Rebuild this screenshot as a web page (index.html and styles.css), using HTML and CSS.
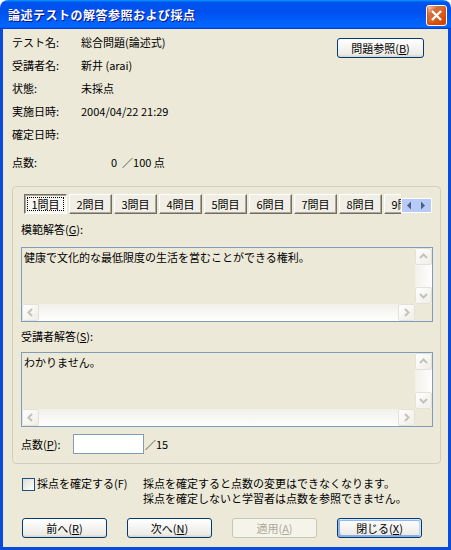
FILE: index.html
```html
<!DOCTYPE html>
<html lang="ja">
<head>
    <meta charset="UTF-8">
    <meta name="viewport" content="width=device-width, initial-scale=1.0">
    <title>論述テストの解答参照および採点</title>
    <link rel="stylesheet" href="styles.css">
</head>
<body>

<div class="window">
    <div class="titlebar">
        <span class="title">論述テストの解答参照および採点</span>
        <span class="close">
            <svg width="13" height="13" viewBox="0 0 13 13"><path d="M2 2L11 11M11 2L2 11" stroke="#fff" stroke-width="2.4"/></svg>
        </span>
    </div>

    <div class="client">
        <div class="head">
            <div class="info">
                <div class="row"><span class="lbl">テスト名:</span><span>総合問題(論述式)</span></div>
                <div class="row"><span class="lbl">受講者名:</span><span>新井 (arai)</span></div>
                <div class="row"><span class="lbl">状態:</span><span>未採点</span></div>
                <div class="row"><span class="lbl">実施日時:</span><span>2004/04/22 21:29</span></div>
                <div class="row"><span class="lbl">確定日時:</span><span></span></div>
                <div class="row score"><span class="lbl">点数:</span><span class="pts">0 &nbsp;／100 点</span></div>
            </div>
            <button class="btn ref">問題参照(<u>B</u>)</button>
        </div>

        <div class="group">
            <div class="tabs">
                <div class="strip">
                    <span class="tab on">1問目</span>
                    <span class="tab">2問目</span>
                    <span class="tab">3問目</span>
                    <span class="tab">4問目</span>
                    <span class="tab">5問目</span>
                    <span class="tab">6問目</span>
                    <span class="tab">7問目</span>
                    <span class="tab">8問目</span>
                    <span class="tab">9問目</span>
                </div>
                <span class="spin">
                    <svg width="29" height="13" viewBox="0 0 29 13"><path d="M5 6.5L9 2.5V10.5Z M23 6.5L19 2.5V10.5Z" fill="#4d6185"/></svg>
                </span>
            </div>

            <div class="cap first">模範解答(<u>G</u>):</div>
            <div class="memo first">
                <div class="text">健康で文化的な最低限度の生活を営むことができる権利。</div>
                <div class="vbar">
                    <span class="arr"><svg width="15" height="15" viewBox="0 0 15 15"><path d="M4 9L7.5 5.5L11 9" fill="none" stroke="#c4c3b9" stroke-width="2"/></svg></span>
                    <span class="arr"><svg width="15" height="15" viewBox="0 0 15 15"><path d="M4 6L7.5 9.5L11 6" fill="none" stroke="#c4c3b9" stroke-width="2"/></svg></span>
                </div>
                <div class="hbar">
                    <span class="arr"><svg width="15" height="15" viewBox="0 0 15 15"><path d="M9 4L5.5 7.5L9 11" fill="none" stroke="#c4c3b9" stroke-width="2"/></svg></span>
                    <span class="arr"><svg width="15" height="15" viewBox="0 0 15 15"><path d="M6 4L9.5 7.5L6 11" fill="none" stroke="#c4c3b9" stroke-width="2"/></svg></span>
                </div>
                <div class="corner"></div>
            </div>

            <div class="cap">受講者解答(<u>S</u>):</div>
            <div class="memo">
                <div class="text">わかりません。</div>
                <div class="vbar">
                    <span class="arr"><svg width="15" height="15" viewBox="0 0 15 15"><path d="M4 9L7.5 5.5L11 9" fill="none" stroke="#c4c3b9" stroke-width="2"/></svg></span>
                    <span class="arr"><svg width="15" height="15" viewBox="0 0 15 15"><path d="M4 6L7.5 9.5L11 6" fill="none" stroke="#c4c3b9" stroke-width="2"/></svg></span>
                </div>
                <div class="hbar">
                    <span class="arr"><svg width="15" height="15" viewBox="0 0 15 15"><path d="M9 4L5.5 7.5L9 11" fill="none" stroke="#c4c3b9" stroke-width="2"/></svg></span>
                    <span class="arr"><svg width="15" height="15" viewBox="0 0 15 15"><path d="M6 4L9.5 7.5L6 11" fill="none" stroke="#c4c3b9" stroke-width="2"/></svg></span>
                </div>
                <div class="corner"></div>
            </div>

            <div class="points">
                <span class="plbl">点数(<u>P</u>):</span>
                <span class="pbox"></span>
                <span>／15</span>
            </div>
        </div>

        <div class="confirm">
            <label class="check"><span class="box"></span>採点を確定する(F)</label>
            <p class="note">採点を確定すると点数の変更はできなくなります。<br>採点を確定しないと学習者は点数を参照できません。</p>
        </div>

        <div class="actions">
            <button class="btn">前へ(<u>R</u>)</button>
            <button class="btn">次へ(<u>N</u>)</button>
            <button class="btn" disabled>適用(<u>A</u>)</button>
            <button class="btn def">閉じる(<u>X</u>)</button>
        </div>
    </div>
</div>

</body>
</html>
```

FILE: styles.css
```css
* { margin: 0; padding: 0; box-sizing: border-box; }
body {
    background: #fff;
    font-family: "Noto Sans CJK JP", sans-serif;
    font-size: 11px;
    color: #000;
}
u { text-decoration: underline; }

.window {
    width: 451px;
    height: 550px;
    display: flex;
    flex-direction: column;
    border-radius: 8px 8px 0 0;
    overflow: hidden;
}
.titlebar {
    height: 29px;
    flex: none;
    display: flex;
    justify-content: space-between;
    align-items: flex-start;
    padding: 0 4px 0 8px;
    background: linear-gradient(180deg, #0997ff, #0053ee 8%, #0050ee 40%, #0066ff 88%, #0066ff 93%, #005bff 95%, #003dd7 96%, #003dd7);
}
.title {
    color: #fff;
    font-weight: bold;
    font-size: 12px;
    letter-spacing: 0.5px;
    line-height: 30px;
    text-shadow: 1px 1px #0f1089;
}
.close {
    width: 21px;
    height: 21px;
    margin-top: 5px;
    display: flex;
    align-items: center;
    justify-content: center;
    border: 1px solid #fff;
    border-radius: 3px;
    background: radial-gradient(circle at 90% 90%, #cc4600 0, #dc6527 55%, #cd7546 70%, #ffccb2 90%, #fff 100%);
    box-shadow: inset 0 -1px 2px 1px #da4600;
}

.client {
    flex: 1;
    background: #ece9d8;
    border: 3px solid #0a4bd9;
    border-top: none;
    padding: 2px 7px 0 9px;
}

.head {
    display: flex;
    justify-content: space-between;
    align-items: flex-start;
}
.row {
    display: flex;
    height: 23px;
    line-height: 23px;
}
.row.score { margin-top: 5px; }
.lbl { width: 69px; }
.pts { padding-left: 30px; }

.btn {
    font: inherit;
    width: 85px;
    height: 20px;
    color: #000;
    border: 1px solid #003c74;
    border-radius: 3px;
    background: linear-gradient(180deg, #fff, #ecebe6 86%, #d6d0c5);
}
.btn.ref {
    width: 87px;
    margin: 7px 17px 0 0;
}
.btn.def {
    box-shadow: inset -1px 1px #cee7ff, inset 1px 2px #98b8ea, inset -2px 2px #bcd4f6, inset 1px -1px #89ade4, inset 2px -2px #89ade4;
}
.btn:disabled {
    color: #aca899;
    border-color: #c9c7ba;
    background: #f5f4ea;
}

.group {
    margin-top: 12px;
    border: 1px solid #d0d0bf;
    border-radius: 4px;
    padding: 7px 7px 9px 8px;
}
.tabs {
    display: flex;
    margin-left: 3px;
    height: 20px;
}
.strip {
    display: flex;
    gap: 2px;
    width: 377px;
    overflow: hidden;
}
.tab {
    flex: none;
    width: 43px;
    height: 20px;
    line-height: 18px;
    text-align: center;
    background: #f1efe5;
    border: 1px solid;
    border-color: #fff #716f64 #716f64 #fff;
    box-shadow: inset -1px -1px #aca899;
}
.tab.on {
    border-color: #716f64 #fff #fff #716f64;
    box-shadow: inset 1px 1px #aca899;
    background: #f7f6f1;
    outline: 1px dotted #000;
    outline-offset: -4px;
}
.spin {
    width: 31px;
    height: 15px;
    margin-top: 4px;
    border: 1px solid #fff;
    background: #b7cbf8;
    display: flex;
}

.cap {
    margin-top: 6px;
    line-height: 16px;
}
.cap.first { margin-top: 7px; }
.memo {
    margin-top: 8px;
    height: 75px;
    border: 1px solid #7f9db9;
    background: #ece9d8;
    display: grid;
    grid-template-columns: 1fr 17px;
    grid-template-rows: 1fr 17px;
}
.memo.first { margin-top: 10px; }
.text {
    padding: 1px 2px;
    line-height: 16px;
}
.vbar {
    display: flex;
    flex-direction: column;
    justify-content: space-between;
    background: linear-gradient(90deg, #f3f1ec, #fefefe);
}
.hbar {
    display: flex;
    justify-content: space-between;
    background: linear-gradient(180deg, #f1f0ea, #fefefe);
}
.arr {
    width: 17px;
    height: 17px;
    display: flex;
    align-items: center;
    justify-content: center;
    border: 1px solid #e4e2d8;
    border-radius: 2px;
    background: linear-gradient(135deg, #fefefe, #efeee7);
}
.corner { background: #ece9d8; }

.points {
    display: flex;
    align-items: center;
    margin-top: 7px;
    height: 20px;
}
.plbl { width: 52px; }
.pbox {
    width: 71px;
    height: 20px;
    border: 1px solid #7f9db9;
    background: #fff;
    margin-right: 1px;
}

.confirm {
    display: flex;
    margin-top: 12px;
    line-height: 15px;
}
.check {
    width: 131px;
    display: flex;
    align-items: flex-start;
    padding-left: 10px;
}
.box {
    width: 13px;
    height: 13px;
    margin: 2px 2px 0 0;
    border: 1px solid #1c5180;
    background: linear-gradient(135deg, #dcdcd7, #fff);
}

.actions {
    display: flex;
    gap: 20px;
    margin: 12px 0 0 10px;
}
```
